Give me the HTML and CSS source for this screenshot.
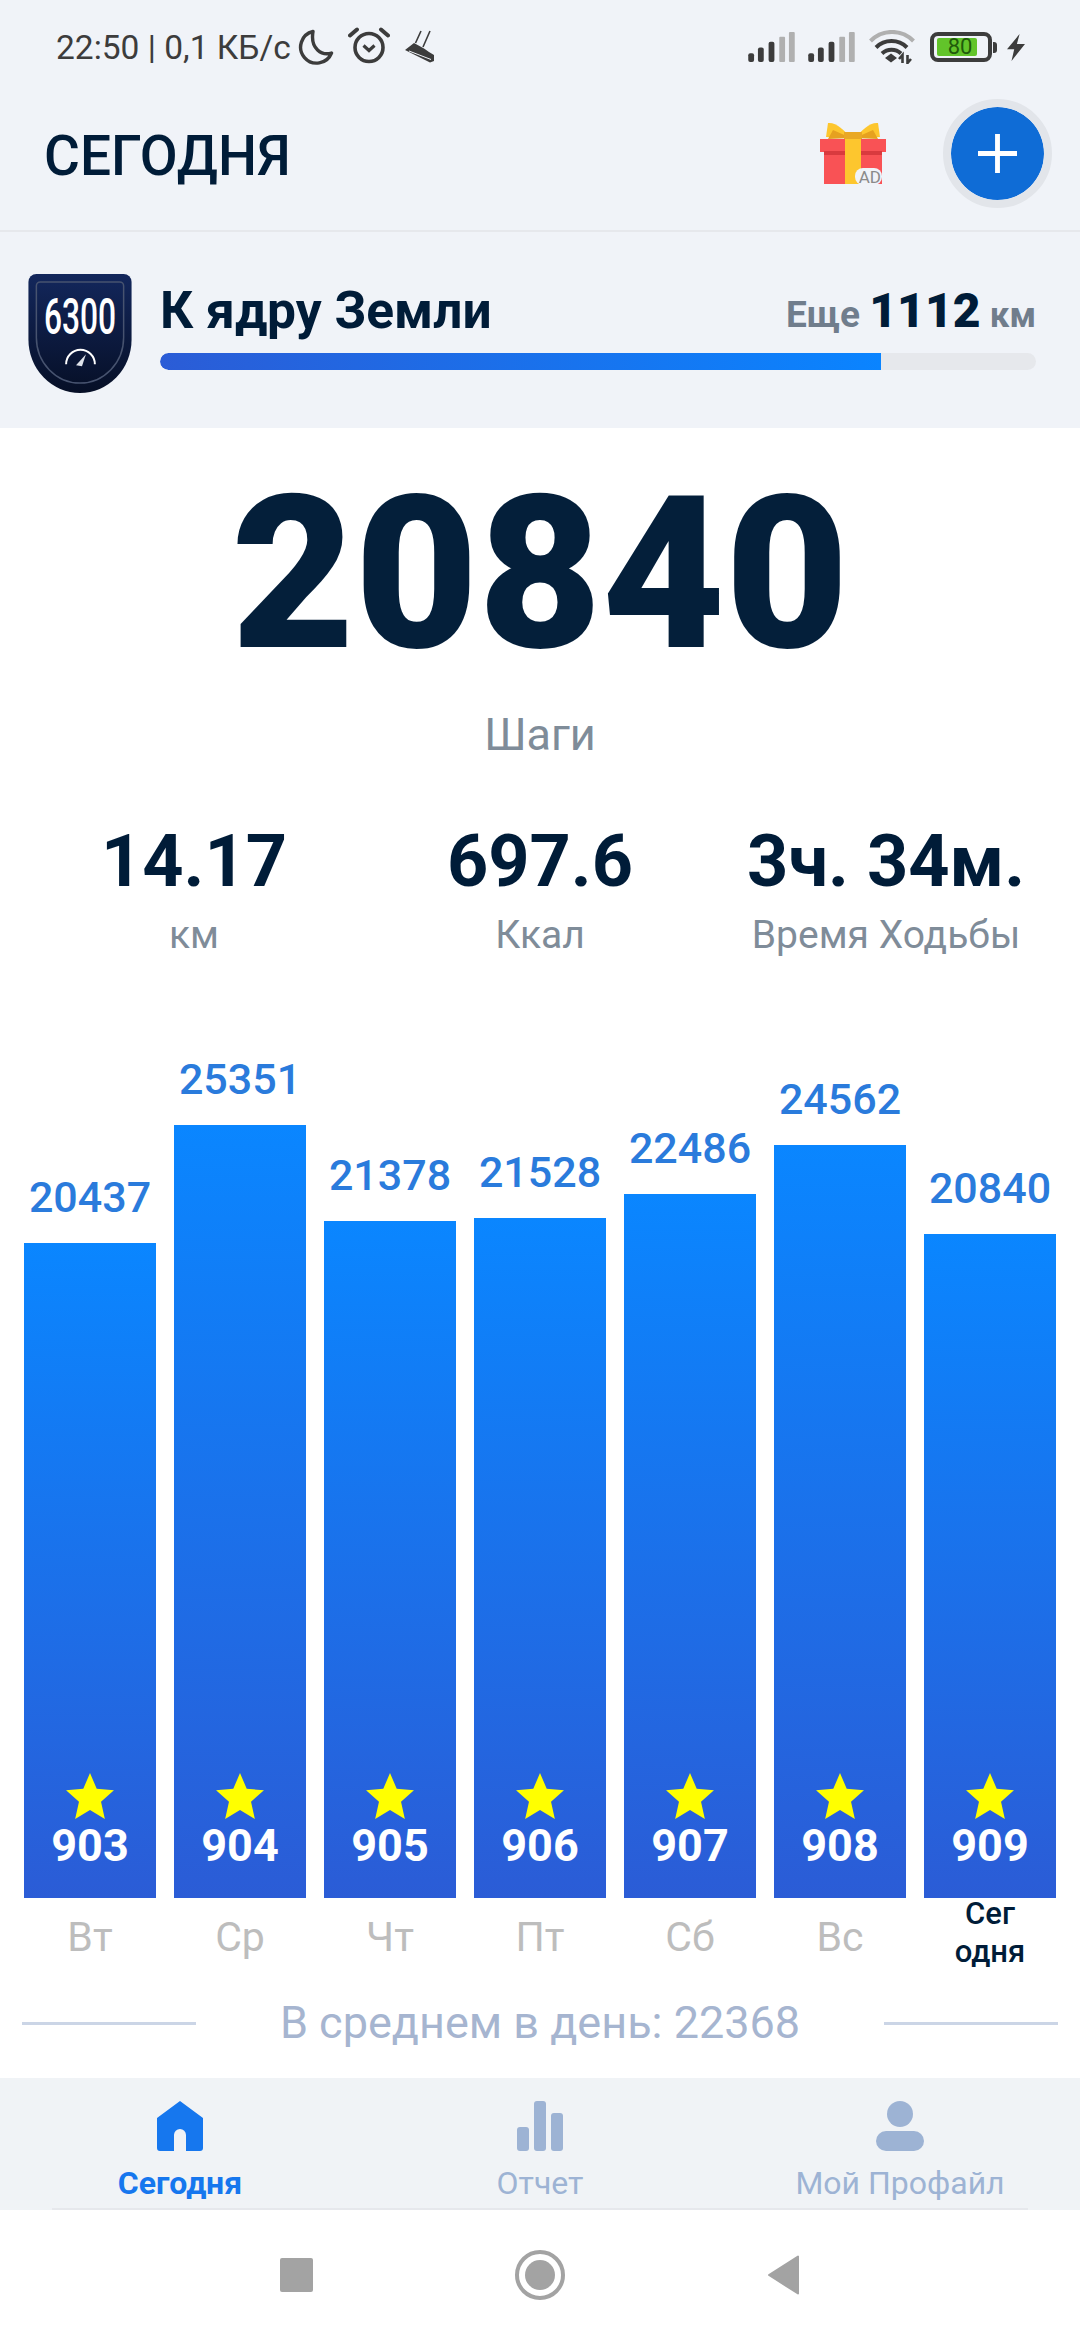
FILE: index.html
```html
<!DOCTYPE html>
<html>
<head>
  <meta charset="utf-8">
  <title>Сегодня</title>
  <link rel="stylesheet" href="styles.css">
</head>
<body>
<div class="app">

  <div class="status">
    <span class="status-text">22:50 | 0,1 КБ/с</span>
    <svg class="ic-moon" viewBox="0 0 36 36"><path d="M15 2.500 A16 16 0 1 0 33.500 24 C24 27 12 20 15 2.500 Z" fill="none" stroke="#3c3c3c" stroke-width="3.400" stroke-linejoin="round"/></svg>
    <svg class="ic-alarm" viewBox="0 0 42 38"><circle cx="21" cy="21.500" r="14" fill="none" stroke="#3c3c3c" stroke-width="3.600"/><path d="M15.500 19.500l5.500 5 5.500-5" fill="none" stroke="#3c3c3c" stroke-width="3.200"/><path d="M2 9.500L9 3.500M40 9.500L33 3.500" stroke="#3c3c3c" stroke-width="4" stroke-linecap="round"/></svg>
    <svg class="ic-shoe" viewBox="0 0 32 36"><path d="M18 2L12.500 14M27 2L20 18" stroke="#3c3c3c" stroke-width="1.600" fill="none"/><path d="M2 21L11 14 21 19.500 26 23 31 26 31 32 27 33.500Z" fill="#3c3c3c"/><path d="M6 22L28 30.500" stroke="#f0f3f8" stroke-width="1"/></svg>
    <span class="status-right">
      <svg class="ic-signal" viewBox="0 0 48 32"><rect x="0" y="22" width="6" height="9" rx="2" fill="#3c3c3c"/><rect x="10" y="16" width="6" height="15" rx="2" fill="#3c3c3c"/><rect x="21" y="10" width="6" height="21" rx="2" fill="#3c3c3c"/><rect x="32" y="5" width="6" height="26" rx="1" fill="#b0b0b0"/><rect x="42" y="0" width="6" height="31" rx="1" fill="#b0b0b0"/></svg>
      <svg class="ic-signal" viewBox="0 0 48 32"><rect x="0" y="22" width="6" height="9" rx="2" fill="#3c3c3c"/><rect x="10" y="16" width="6" height="15" rx="2" fill="#3c3c3c"/><rect x="21" y="10" width="6" height="21" rx="2" fill="#3c3c3c"/><rect x="32" y="5" width="6" height="26" rx="1" fill="#b0b0b0"/><rect x="42" y="0" width="6" height="31" rx="1" fill="#b0b0b0"/></svg>
      <svg class="ic-wifi" viewBox="0 0 46 34"><path d="M1.500 11 A30 30 0 0 1 44.500 11" fill="none" stroke="#b0b0b0" stroke-width="4"/><path d="M7 17.500 A22 22 0 0 1 38 17.500" fill="none" stroke="#3c3c3c" stroke-width="4"/><path d="M13 23.500 A14 14 0 0 1 32 23.500" fill="none" stroke="#3c3c3c" stroke-width="4"/><path d="M16 28l6-4.500 6 4.500-6 4.500z" fill="#3c3c3c"/><path d="M33.500 33V25l-3.500 4M38.500 25v8l3.500-4" fill="none" stroke="#3c3c3c" stroke-width="2.600"/></svg>
      <span class="battery"><span class="battery-body"><span class="battery-fill"></span><span class="battery-num">80</span></span><span class="battery-tip"></span></span>
      <svg class="ic-bolt" viewBox="0 0 20 30"><path d="M14 0L0 17H8L5 30 20 11H11Z" fill="#3c3c3c"/></svg>
    </span>
  </div>

  <div class="header">
    <h1 class="title">СЕГОДНЯ</h1>
    <div class="gift">
      <svg class="gift-svg" viewBox="0 0 66 62">
        <path d="M31 16C24 8 16 0 8 1L6 15Z" fill="#fdc62e"/>
        <path d="M35 16C42 8 50 0 58 1L60 15Z" fill="#fdc62e"/>
        <path d="M8 17L13 8 31 16Z M58 17L53 8 35 16Z" fill="#e6a11f"/>
        <rect x="24" y="10" width="18" height="8" fill="#e9a825"/>
        <rect x="0" y="17" width="66" height="13" fill="#f95255"/>
        <rect x="4" y="30" width="58" height="32" fill="#f95255"/>
        <rect x="4" y="29" width="58" height="4" fill="#d93a3e"/>
        <rect x="25" y="17" width="16" height="45" fill="#fdc62e"/>
      </svg>
      <span class="gift-ad">AD</span>
    </div>
    <div class="add-btn">
      <svg class="add-plus" viewBox="0 0 40 40"><path d="M20 0V40M0 20H40" stroke="#fff" stroke-width="5"/></svg>
    </div>
  </div>

  <div class="goal">
    <svg class="badge" viewBox="0 0 104 120">
      <defs>
        <linearGradient id="shield" x1="0" y1="0" x2="0" y2="1">
          <stop offset="0" stop-color="#13275c"/>
          <stop offset="1" stop-color="#060f26"/>
        </linearGradient>
      </defs>
      <path d="M8 0H96A8 8 0 0 1 104 8V66A52 54 0 0 1 0 66V8A8 8 0 0 1 8 0Z" fill="url(#shield)"/>
      <path d="M12 8H92A4 4 0 0 1 96 12V64A44 46 0 0 1 8 64V12A4 4 0 0 1 12 8Z" fill="none" stroke="#47536f" stroke-width="1.500"/>
      <text class="badge-num" transform="translate(52 61) scale(0.64 1)" text-anchor="middle">6300</text>
      <path d="M38 91A14.500 14.500 0 0 1 67 91" fill="none" stroke="#fff" stroke-width="2"/>
      <path d="M48 92L58 81 54 93Z" fill="#dfe3ea"/>
    </svg>
    <div class="goal-main">
      <div class="goal-top">
        <span class="goal-name">К ядру Земли</span>
        <span class="goal-left">Еще <b class="goal-km">1112</b> <span class="goal-unit">км</span></span>
      </div>
      <div class="progress"><div class="progress-fill" style="width: 82.3%"></div></div>
    </div>
  </div>

  <div class="main">
    <div class="steps">20840</div>
    <div class="steps-label">Шаги</div>

    <div class="stats">
      <div class="stat"><div class="stat-num">14.17</div><div class="stat-label">км</div></div>
      <div class="stat"><div class="stat-num">697.6</div><div class="stat-label">Ккал</div></div>
      <div class="stat"><div class="stat-num">3ч. 34м.</div><div class="stat-label">Время Ходьбы</div></div>
    </div>

    <div class="chart">
      <div class="col">
        <div class="val">20437</div>
        <div class="bar" style="height: 655px"><svg class="star" viewBox="0 0 50 48"><path d="M25 0L32 16.500 50 18 36.500 30 40.500 48 25 38.500 9.500 48 13.500 30 0 18 18 16.500Z"/></svg><span class="bar-num">903</span></div>
        <div class="day">Вт</div>
      </div>
      <div class="col">
        <div class="val">25351</div>
        <div class="bar" style="height: 773px"><svg class="star" viewBox="0 0 50 48"><path d="M25 0L32 16.500 50 18 36.500 30 40.500 48 25 38.500 9.500 48 13.500 30 0 18 18 16.500Z"/></svg><span class="bar-num">904</span></div>
        <div class="day">Ср</div>
      </div>
      <div class="col">
        <div class="val">21378</div>
        <div class="bar" style="height: 677px"><svg class="star" viewBox="0 0 50 48"><path d="M25 0L32 16.500 50 18 36.500 30 40.500 48 25 38.500 9.500 48 13.500 30 0 18 18 16.500Z"/></svg><span class="bar-num">905</span></div>
        <div class="day">Чт</div>
      </div>
      <div class="col">
        <div class="val">21528</div>
        <div class="bar" style="height: 680px"><svg class="star" viewBox="0 0 50 48"><path d="M25 0L32 16.500 50 18 36.500 30 40.500 48 25 38.500 9.500 48 13.500 30 0 18 18 16.500Z"/></svg><span class="bar-num">906</span></div>
        <div class="day">Пт</div>
      </div>
      <div class="col">
        <div class="val">22486</div>
        <div class="bar" style="height: 704px"><svg class="star" viewBox="0 0 50 48"><path d="M25 0L32 16.500 50 18 36.500 30 40.500 48 25 38.500 9.500 48 13.500 30 0 18 18 16.500Z"/></svg><span class="bar-num">907</span></div>
        <div class="day">Сб</div>
      </div>
      <div class="col">
        <div class="val">24562</div>
        <div class="bar" style="height: 753px"><svg class="star" viewBox="0 0 50 48"><path d="M25 0L32 16.500 50 18 36.500 30 40.500 48 25 38.500 9.500 48 13.500 30 0 18 18 16.500Z"/></svg><span class="bar-num">908</span></div>
        <div class="day">Вс</div>
      </div>
      <div class="col">
        <div class="val">20840</div>
        <div class="bar" style="height: 664px"><svg class="star" viewBox="0 0 50 48"><path d="M25 0L32 16.500 50 18 36.500 30 40.500 48 25 38.500 9.500 48 13.500 30 0 18 18 16.500Z"/></svg><span class="bar-num">909</span></div>
        <div class="day day-today">Сег<br>одня</div>
      </div>
    </div>

    <div class="avg">
      <span class="avg-line"></span>
      <span class="avg-text">В среднем в день: 22368</span>
      <span class="avg-line"></span>
    </div>
  </div>

  <div class="tabs">
    <div class="tab tab-active">
      <svg class="tab-icon" viewBox="0 0 46 50"><path d="M23 0L46 17V47A3 3 0 0 1 43 50H29V34A6 6 0 0 0 17 34V50H3A3 3 0 0 1 0 47V17Z" fill="#1677ee"/></svg>
      <span>Сегодня</span>
    </div>
    <div class="tab">
      <svg class="tab-icon" viewBox="0 0 46 50"><rect x="0" y="26" width="12" height="24" rx="3" fill="#9db3d4"/><rect x="17" y="0" width="12" height="50" rx="3" fill="#9db3d4"/><rect x="34" y="12" width="12" height="38" rx="3" fill="#9db3d4"/></svg>
      <span>Отчет</span>
    </div>
    <div class="tab">
      <svg class="tab-icon" viewBox="0 0 48 50"><circle cx="24" cy="13" r="13" fill="#9db3d4"/><rect x="0" y="30" width="48" height="20" rx="10" fill="#9db3d4"/></svg>
      <span>Мой Профайл</span>
    </div>
  </div>

  <div class="nav">
    <span class="nav-item"><span class="nav-square"></span></span>
    <span class="nav-item"><span class="nav-ring"><span class="nav-dot"></span></span></span>
    <span class="nav-item"><svg class="nav-back" viewBox="0 0 32 40"><path d="M30 1.500V38.500L1 20Z" fill="#a3a3a3" stroke="#a3a3a3" stroke-width="2" stroke-linejoin="round"/></svg></span>
  </div>

</div>
</body>
</html>
```

FILE: styles.css
```css
* {
  box-sizing: border-box;
}
body {
  margin: 0;
  background-color: #fff;
  font-family: Roboto, "Noto Sans", sans-serif;
}
.app {
  width: 1080px;
  height: 2340px;
  display: flex;
  flex-direction: column;
  overflow: hidden;
}

/* status bar */
.status {
  height: 90px;
  padding: 4px 55px 0 56px;
  display: flex;
  align-items: center;
  background-color: #f0f3f8;
}
.status-text {
  font-size: 33.500px;
  color: #3c3c3c;
  white-space: nowrap;
}
.ic-moon {
  width: 36px;
  height: 36px;
  margin-left: 7px;
}
.ic-alarm {
  width: 42px;
  height: 38px;
  margin-left: 14px;
  margin-top: -4px;
}
.ic-shoe {
  width: 32px;
  height: 36px;
  margin-left: 13px;
}
.status-right {
  margin-left: auto;
  display: flex;
  align-items: center;
}
.ic-signal {
  width: 47px;
  height: 31px;
  margin-right: 13px;
}
.ic-wifi {
  width: 46px;
  height: 34px;
  margin-left: 1px;
  margin-right: 15px;
}
.battery {
  display: flex;
  align-items: center;
  margin-right: 10px;
}
.battery-body {
  position: relative;
  width: 62px;
  height: 30px;
  border: 4px solid #3c3c3c;
  border-radius: 8px;
  padding: 2px 3px;
}
.battery-fill {
  display: block;
  width: 40px;
  height: 18px;
  background-color: #62c42a;
  border-radius: 2px;
}
.battery-num {
  position: absolute;
  left: 0;
  right: 2px;
  top: -4px;
  text-align: center;
  font-size: 22px;
  line-height: 30px;
  color: #1f5a0a;
}
.battery-tip {
  width: 4px;
  height: 11px;
  margin-left: 1px;
  background-color: #3c3c3c;
  border-radius: 0 3px 3px 0;
}
.ic-bolt {
  width: 18px;
  height: 29px;
}

/* header */
.header {
  height: 142px;
  padding: 0 28px 14px 44px;
  display: flex;
  align-items: center;
  background-color: #f0f3f8;
  border-bottom: 2px solid #e6e8ec;
}
.title {
  margin: 5px 0 0;
  font-size: 55px;
  font-weight: 500;
  color: #001c38;
}
.gift {
  position: relative;
  width: 66px;
  height: 62px;
  margin-left: auto;
  margin-right: 57px;
}
.gift-svg {
  display: block;
  width: 66px;
  height: 62px;
}
.gift-ad {
  position: absolute;
  right: 4px;
  bottom: -1px;
  padding: 1px 1px 0 4px;
  font-size: 17px;
  line-height: 16px;
  color: #8a8a8a;
  background-color: #f0f3f8;
  border-radius: 8px;
}
.add-btn {
  width: 109px;
  height: 109px;
  display: flex;
  align-items: center;
  justify-content: center;
  background-color: #0f6cd6;
  background-clip: padding-box;
  border: 8px solid #e2e5ea;
  border-radius: 50%;
}
.add-plus {
  width: 39px;
  height: 39px;
}

/* goal */
.goal {
  height: 196px;
  padding: 42px 44px 0 28px;
  display: flex;
  align-items: flex-start;
  background-color: #f0f3f8;
}
.badge {
  width: 104px;
  height: 119px;
  flex: none;
}
.badge-num {
  font-family: Roboto, sans-serif;
  font-size: 50px;
  font-weight: 500;
  fill: #fff;
}
.goal-main {
  flex: 1;
  margin-left: 28px;
}
.goal-top {
  height: 72px;
  display: flex;
  align-items: center;
  justify-content: space-between;
}
.goal-name {
  font-size: 51.500px;
  font-weight: 700;
  color: #001c38;
}
.goal-left {
  font-size: 37px;
  font-weight: 700;
  color: #707d8c;
}
.goal-km {
  font-size: 48px;
  color: #001c38;
}
.goal-unit {
  font-size: 35px;
}
.progress {
  height: 17px;
  margin-top: 7px;
  background-color: #e6e8ec;
  border-radius: 9px;
  overflow: hidden;
}
.progress-fill {
  height: 100%;
  background: linear-gradient(to right, #2b5cd6, #0a84ff);
  border-radius: 9px 0 0 9px;
}

/* main */
.main {
  flex: 1;
  background-color: #fff;
  display: flex;
  flex-direction: column;
}
.steps {
  margin-top: 36px;
  text-align: center;
  font-size: 213px;
  line-height: 220px;
  font-weight: 900;
  color: #041f3a;
}
.steps-label {
  margin-top: 26px;
  text-align: center;
  font-size: 45px;
  line-height: 50px;
  color: #7f8c99;
}
.stats {
  margin-top: 62px;
  padding: 0 21px;
  display: grid;
  grid-template-columns: repeat(3, 1fr);
}
.stat {
  text-align: center;
}
.stat-num {
  font-size: 72px;
  line-height: 80px;
  font-weight: 700;
  color: #001c38;
  white-space: nowrap;
}
.stat-label {
  margin-top: 10px;
  font-size: 39px;
  line-height: 46px;
  color: #7f8c99;
}
.chart {
  margin-top: 48px;
  padding: 0 24px;
  height: 970px;
  display: flex;
  gap: 18px;
  align-items: flex-end;
}
.col {
  width: 132px;
  display: flex;
  flex-direction: column;
}
.val {
  text-align: center;
  font-size: 43px;
  line-height: 50px;
  font-weight: 500;
  color: #2a7bdc;
  margin-bottom: 21px;
}
.bar {
  display: flex;
  flex-direction: column;
  align-items: center;
  justify-content: flex-end;
  padding-bottom: 27px;
  background: linear-gradient(to bottom, #0a86ff, #2b5cd6);
}
.star {
  width: 48px;
  height: 46px;
  fill: #ffff00;
}
.bar-num {
  margin-top: 2px;
  font-size: 45px;
  line-height: 50px;
  font-weight: 700;
  color: #fff;
}
.day {
  height: 78px;
  padding-top: 15px;
  text-align: center;
  font-size: 41px;
  line-height: 48px;
  color: #bdbdbd;
}
.day-today {
  height: 81px;
  margin-top: -3px;
  padding-top: 0;
  font-size: 31px;
  line-height: 38px;
  font-weight: 500;
  color: #001c38;
}
.avg {
  margin-top: 22px;
  padding: 0 22px;
  display: flex;
  align-items: center;
  justify-content: space-between;
}
.avg-line {
  width: 174px;
  height: 3px;
  background-color: #cbd5e6;
}
.avg-text {
  font-size: 45px;
  line-height: 50px;
  color: #a6b5d0;
}

/* tabs */
.tabs {
  height: 132px;
  padding-top: 23px;
  display: grid;
  grid-template-columns: repeat(3, 1fr);
  background: linear-gradient(#e6e8ec, #e6e8ec) 52px 100% / 976px 2px no-repeat, #f0f3f6;
}
.tab {
  display: flex;
  flex-direction: column;
  align-items: center;
  font-size: 32px;
  line-height: 40px;
  color: #9db3d4;
}
.tab-active {
  font-weight: 700;
  color: #1677ee;
}
.tab-icon {
  height: 50px;
  margin-bottom: 12px;
}

/* android nav */
.nav {
  height: 130px;
  display: flex;
  align-items: center;
  justify-content: center;
  gap: 184px;
  background-color: #fff;
}
.nav-item {
  width: 60px;
  display: flex;
  justify-content: center;
}
.nav-square {
  width: 33px;
  height: 34px;
  background-color: #a3a3a3;
  border-radius: 2px;
}
.nav-ring {
  width: 50px;
  height: 50px;
  padding: 6px;
  border: 4px solid #a3a3a3;
  border-radius: 50%;
  display: block;
}
.nav-dot {
  display: block;
  width: 100%;
  height: 100%;
  background-color: #a3a3a3;
  border-radius: 50%;
}
.nav-back {
  width: 32px;
  height: 40px;
}
```
